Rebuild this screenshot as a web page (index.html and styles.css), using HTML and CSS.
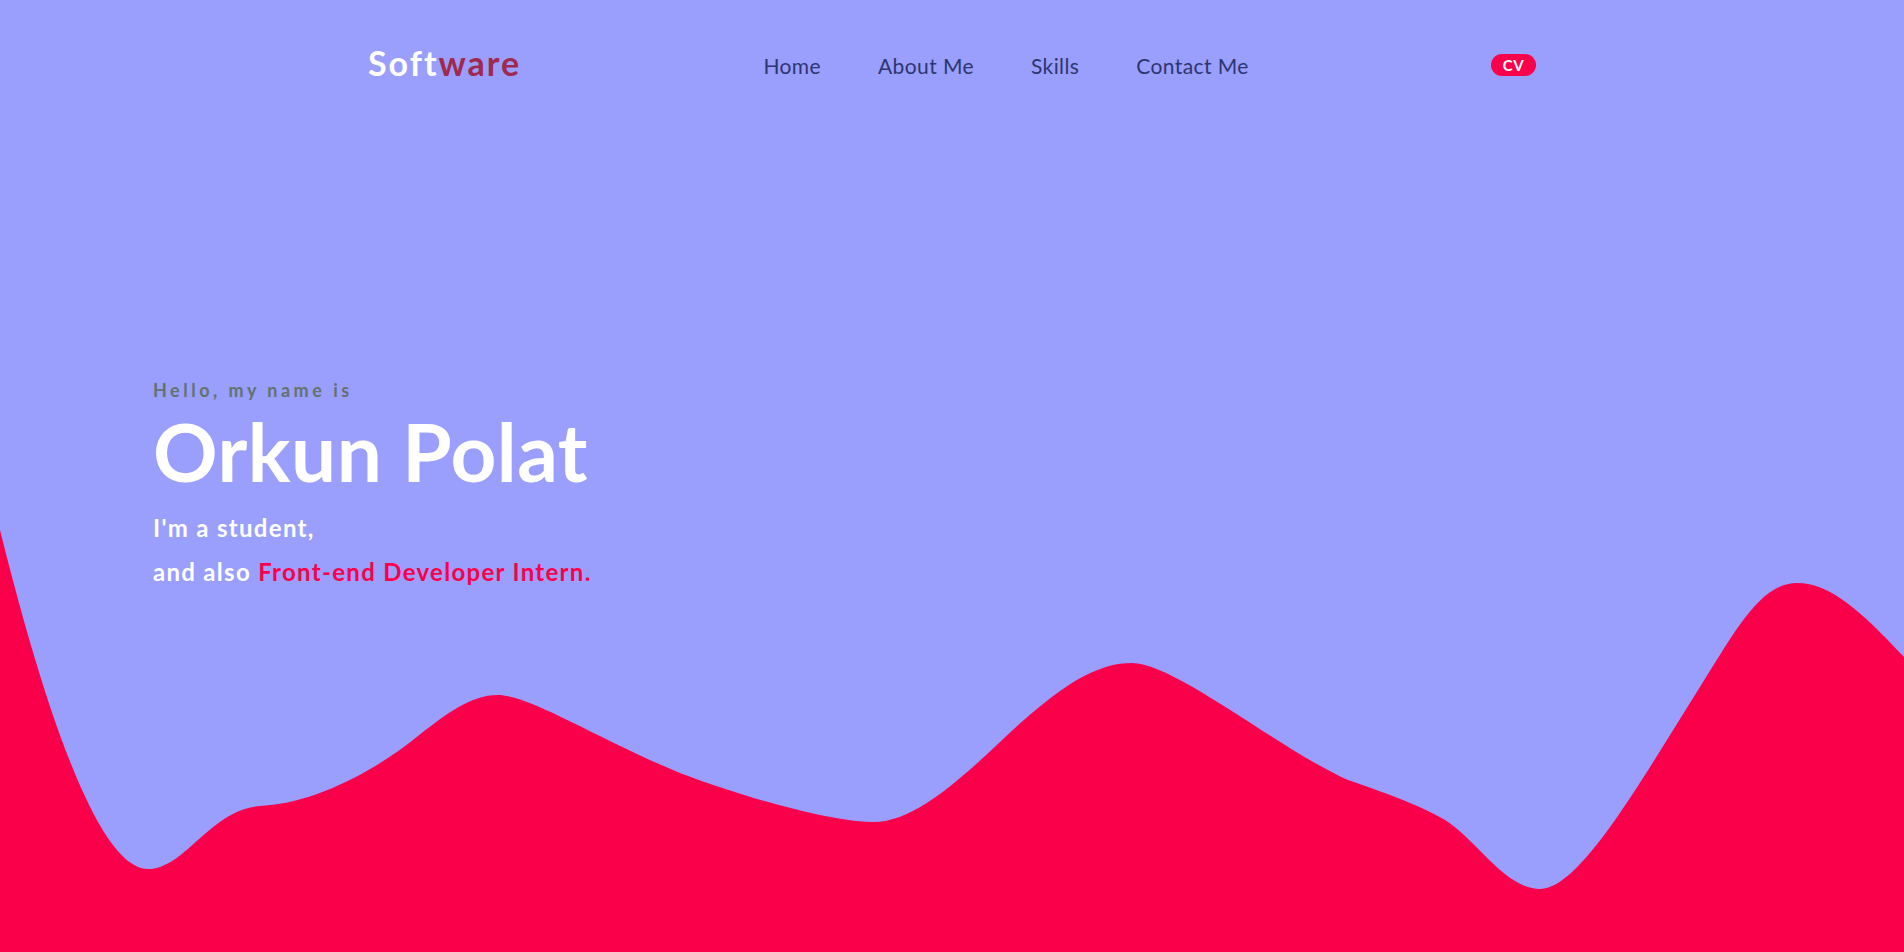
FILE: index.html
```html
<!DOCTYPE html>
<html lang="en">
<head>
<meta charset="utf-8">
<title>Orkun Polat</title>
<link rel="stylesheet" href="styles.css">
</head>
<body>
<div class="page">
  <header class="header">
    <div class="logo">Soft<span class="logo-accent">ware</span></div>
    <nav class="nav">
      <a href="#" class="nav-link">Home</a>
      <a href="#" class="nav-link">About Me</a>
      <a href="#" class="nav-link">Skills</a>
      <a href="#" class="nav-link">Contact Me</a>
    </nav>
    <a href="#" class="cv">CV</a>
  </header>
  <section class="hero">
    <p class="hello">Hello, my name is</p>
    <h1 class="name">Orkun Polat</h1>
    <p class="line">I'm a student,</p>
    <p class="line">and also <span class="accent">Front-end Developer Intern.</span></p>
  </section>
  <svg class="wave" viewBox="0 520 1904 432" preserveAspectRatio="none" aria-hidden="true">
    <path fill="#fa004b" d="M0,530 C30,650 90,869 148,869 C185,869 210,810 260,806 C320,803 380,766 413,740 C446,714 470,695 498,695 C530,695 600,740 680,773 C740,796 830,822 872,822 C925,824 990,748 1032,713 C1070,681 1100,663 1132,663 C1175,663 1280,750 1348,780 C1380,791 1420,805 1445,820 C1475,838 1505,889 1540,889 C1580,889 1640,782 1700,687 C1735,632 1760,583 1797,583 C1830,583 1860,610 1904,657 L1904,952 L0,952 Z"/>
  </svg>
</div>
</body>
</html>
```

FILE: styles.css
```css
* { box-sizing: border-box; }
html, body { margin: 0; padding: 0; }
body {
  background: #9a9efc;
  font-family: Lato, "Open Sans", sans-serif;
  overflow: hidden;
}
.page {
  position: relative;
  width: 1904px;
  height: 952px;
  background: #9a9efc;
}
.header {
  position: relative;
  z-index: 2;
  width: 1168px;
  margin: 0 auto;
  padding-top: 40px;
  height: 90px;
  display: flex;
  align-items: center;
  justify-content: space-between;
}
.logo {
  font-size: 34px;
  font-weight: 700;
  color: #ffffff;
  letter-spacing: 2px;
  line-height: 1;
  margin-top: -5px;
}
.logo-accent { color: #a0294f; }
.nav {
  display: flex;
  gap: 57px;
}
.nav-link {
  font-size: 21px;
  color: #2c3670;
  text-decoration: none;
  line-height: 1;
  letter-spacing: 0.4px;
}
.cv {
  width: 45px;
  height: 22px;
  border-radius: 11px;
  background: #fa004b;
  color: #ffffff;
  font-size: 15px;
  font-weight: 700;
  text-decoration: none;
  display: flex;
  align-items: center;
  justify-content: center;
  letter-spacing: 0.5px;
}
.hero {
  position: relative;
  z-index: 2;
  padding: 291px 0 0 153px;
}
.hello {
  margin: 0;
  font-size: 18px;
  font-weight: 700;
  color: #637270;
  letter-spacing: 3.5px;
  line-height: 1;
}
.name {
  margin: 12px 0 0;
  font-size: 80px;
  font-weight: 700;
  color: #ffffff;
  line-height: 1;
  letter-spacing: 0.5px;
}
.line {
  margin: 0;
  font-size: 24px;
  font-weight: 700;
  color: #ffffff;
  line-height: 44px;
  letter-spacing: 1.3px;
}
.name + .line { margin-top: 15px; }
.accent { color: #fa004b; }
.wave {
  position: absolute;
  left: 0;
  top: 520px;
  width: 1904px;
  height: 432px;
  z-index: 1;
  display: block;
}
```
